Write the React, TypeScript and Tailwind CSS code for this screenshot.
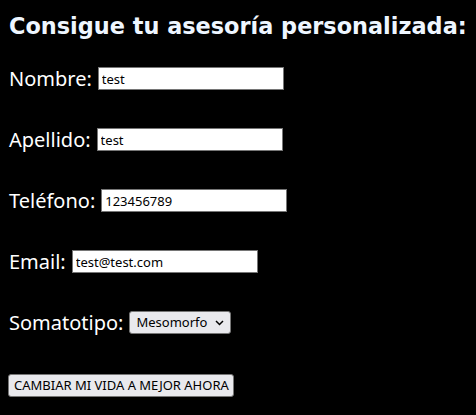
import React from 'react'

const rows = [
    { label: 'Nombre:', value: 'test' },
    { label: 'Apellido:', value: 'test' },
    { label: 'Teléfono:', value: '123456789' },
    { label: 'Email:', value: 'test@test.com' },
]

const App = () => {
    return (
        <div className='min-h-screen bg-black text-white px-[9px] pt-[13px] font-["DejaVu_Sans",sans-serif]'>
            <h2 className='text-[22.4px] font-bold leading-[26px] text-[#eef6ff]'>Consigue tu asesoría personalizada:</h2>
            <div className='flex flex-col gap-[38px] mt-[28px]'>
                {rows.map((r) => (
                    <div key={r.label} className='flex items-center gap-[6px] h-[23px]'>
                        <span className='text-[20px] font-["Noto_Sans",sans-serif]'>{r.label}</span>
                        <input
                            type="text"
                            defaultValue={r.value}
                            className='w-[186px] h-[23px] bg-white text-black border border-[#767676] px-[3px] text-[13px] font-["Noto_Sans",sans-serif] outline-none'
                        />
                    </div>
                ))}
                <div className='flex items-center gap-[6px] h-[23px]'>
                    <span className='text-[20px] font-["Noto_Sans",sans-serif]'>Somatotipo:</span>
                    <div className='relative w-[102px] h-[23px] bg-[#e9e9ed] border border-[#767676] rounded-[3px] text-black text-[13px] font-["Noto_Sans",sans-serif] flex items-center pl-[6px]'>
                        Mesomorfo
                        <svg className='absolute right-[6px] top-[8px]' width='9' height='6' viewBox='0 0 9 6'>
                            <path d='M1 1l3.5 3.5L8 1' stroke='black' strokeWidth='1.5' fill='none' />
                        </svg>
                    </div>
                </div>
                <div className='pt-[1px]'>
                    <button className='h-[23px] pl-[5px] pr-[4px] bg-[#e9e9ed] border border-[#767676] rounded-[3px] text-black text-[13px] font-["Noto_Sans",sans-serif] ml-[-1px]'>
                        CAMBIAR MI VIDA A MEJOR AHORA
                    </button>
                </div>
            </div>
        </div>
    )
}

export default App
